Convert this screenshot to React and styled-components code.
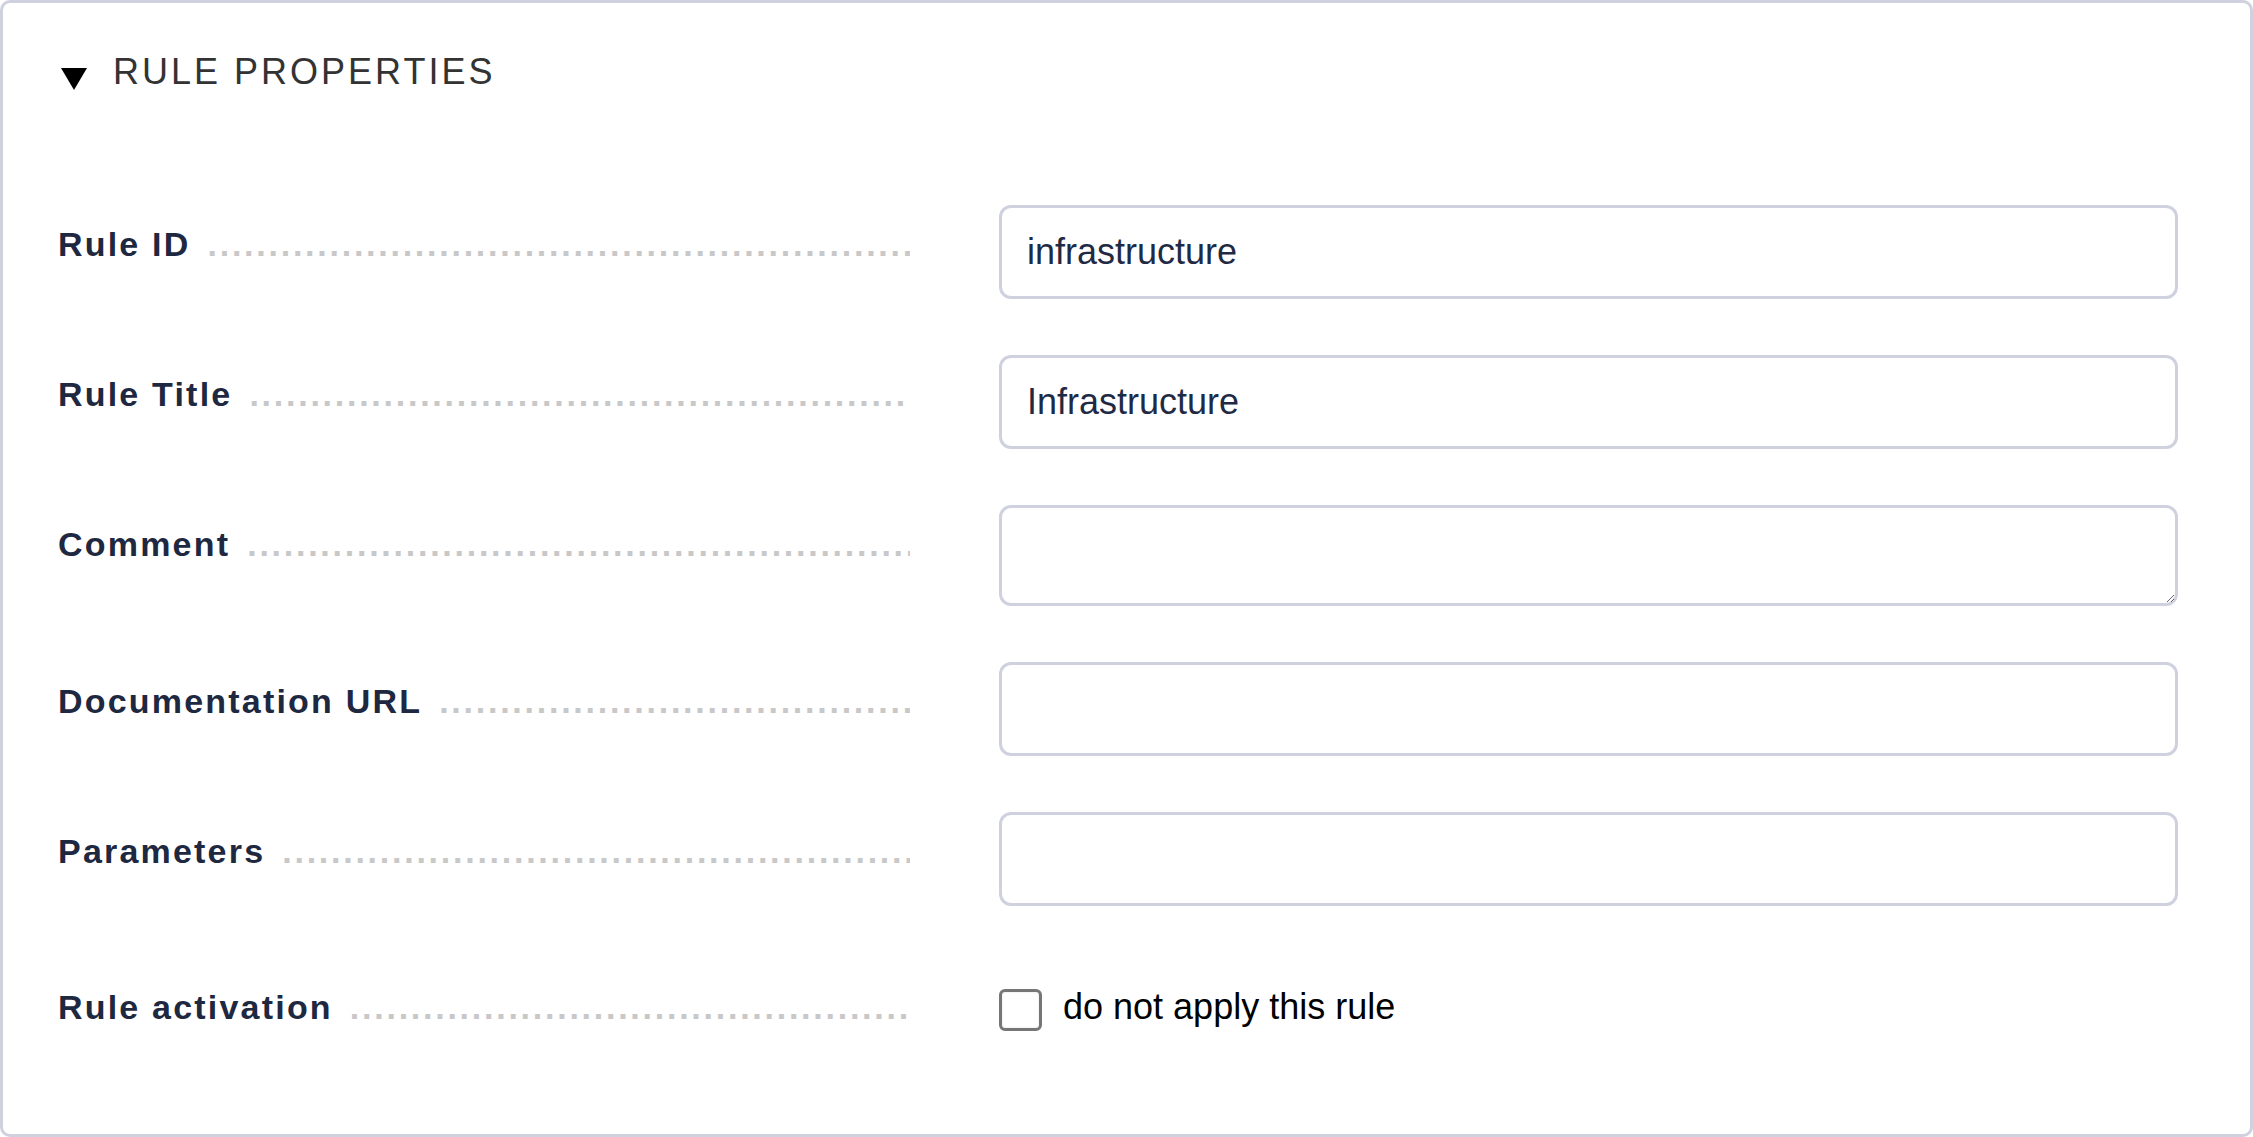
import React from "react";
import styled, { createGlobalStyle } from "styled-components";

const GlobalStyle = createGlobalStyle`
  * { box-sizing: border-box; }
  html, body { margin: 0; padding: 0; background: #ffffff; }
  body { font-family: "Liberation Sans", Arial, Helvetica, sans-serif; }
`;

const Panel = styled.section`
  width: 2253px;
  height: 1137px;
  border: 3px solid #cfd1de;
  border-radius: 10px;
  background: #ffffff;
  padding: 48px 72px 0 55px;
`;

const Header = styled.div`
  display: flex;
  align-items: flex-start;
  height: 42px;
`;

const Caret = styled.svg`
  width: 26px;
  height: 22px;
  margin: 17px 0 0 3px;
  flex: none;
`;

const Title = styled.h2`
  margin: 0 0 0 26px;
  font-size: 36px;
  line-height: 42px;
  font-weight: 400;
  letter-spacing: 3px;
  color: #333333;
  text-transform: uppercase;
`;

const Form = styled.div`
  display: flex;
  flex-direction: column;
  gap: 56px;
  margin-top: 112px;
`;

const Row = styled.div`
  display: grid;
  grid-template-columns: 852px 1fr;
  column-gap: 89px;
  align-items: start;
`;

const LabelCell = styled.div`
  display: flex;
  align-items: baseline;
  padding-top: ${(p) => p.$offset}px;
  min-width: 0;
`;

const Label = styled.label`
  flex: none;
  font-size: 34px;
  line-height: 40px;
  font-weight: 700;
  letter-spacing: 2.2px;
  color: #1e2840;
  white-space: nowrap;
`;

const Leader = styled.span`
  flex: 1;
  min-width: 0;
  margin-left: 17px;
  overflow: hidden;
  white-space: nowrap;
  font-size: 34px;
  line-height: 40px;
  font-weight: 700;
  letter-spacing: 2.75px;
  color: #c8c8c8;
`;

const TextInput = styled.input`
  display: block;
  width: 100%;
  height: 94px;
  border: 3px solid #cfd1de;
  border-radius: 12px;
  padding: 0 25px;
  font-family: "Liberation Sans", Arial, Helvetica, sans-serif;
  font-size: 36px;
  color: #1f2a44;
  background: #ffffff;
  outline: none;
`;

const TextArea = styled.textarea`
  display: block;
  width: 100%;
  height: 101px;
  border: 3px solid #cfd1de;
  border-radius: 12px;
  padding: 22px 25px;
  font-family: "Liberation Sans", Arial, Helvetica, sans-serif;
  font-size: 36px;
  color: #1f2a44;
  background: #ffffff;
  outline: none;
  resize: vertical;
`;

const CheckLine = styled.label`
  display: flex;
  align-items: flex-start;
  gap: 21px;
  padding-top: 24px;
  cursor: pointer;
`;

const Box = styled.input`
  appearance: none;
  -webkit-appearance: none;
  margin: 3px 0 0;
  flex: none;
  width: 43px;
  height: 42px;
  border: 3px solid #767676;
  border-radius: 6px;
  background: #ffffff;
  box-shadow: inset 0 0 2px rgba(0, 0, 0, 0.15);
`;

const CheckText = styled.span`
  font-size: 36px;
  line-height: 42px;
  color: #000000;
`;

const DOTS = ".".repeat(75);

const fields = [
  { label: "Rule ID", value: "infrastructure" },
  { label: "Rule Title", value: "Infrastructure" },
  { label: "Comment", multiline: true },
  { label: "Documentation URL", value: "" },
  { label: "Parameters", value: "" },
];

export default function App() {
  return (
    <>
      <GlobalStyle />
      <Panel>
        <Header>
          <Caret viewBox="0 0 26 22" aria-hidden="true">
            <polygon points="0,0 26,0 13,22" fill="#000" />
          </Caret>
          <Title>Rule properties</Title>
        </Header>
        <Form>
          {fields.map((f) => (
            <Row key={f.label}>
              <LabelCell $offset={19}>
                <Label>{f.label}</Label>
                <Leader>{DOTS}</Leader>
              </LabelCell>
              {f.multiline ? (
                <TextArea defaultValue="" />
              ) : (
                <TextInput type="text" defaultValue={f.value} />
              )}
            </Row>
          ))}
          <Row>
            <LabelCell $offset={25}>
              <Label>Rule activation</Label>
              <Leader>{DOTS}</Leader>
            </LabelCell>
            <CheckLine>
              <Box type="checkbox" />
              <CheckText>do not apply this rule</CheckText>
            </CheckLine>
          </Row>
        </Form>
      </Panel>
    </>
  );
}
